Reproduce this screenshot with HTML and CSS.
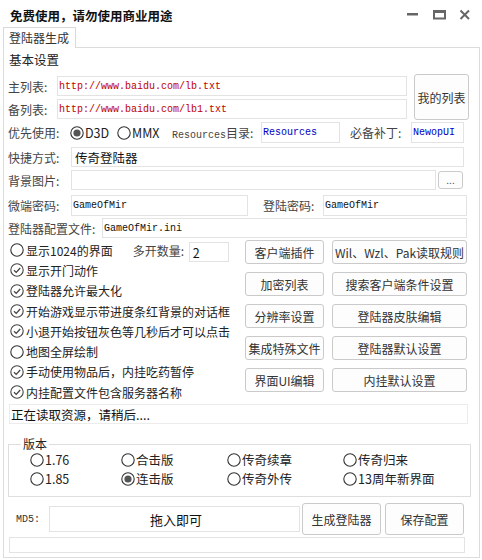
FILE: index.html
```html
<!DOCTYPE html>
<html lang="zh">
<head>
    <meta charset="UTF-8">
    <title>登陆器生成</title>
    <link rel="stylesheet" href="styles.css">
</head>
<body>
<div class="window">
    <div class="titlebar">
        <span class="title">免费使用，请勿使用商业用途</span>
        <div class="winctl">
            <svg width="14" height="14" viewBox="0 0 14 14"><rect x="1" y="6" width="11" height="2.5" fill="#666"/></svg>
            <svg width="14" height="14" viewBox="0 0 14 14"><rect x="2" y="4" width="11" height="7.5" fill="none" stroke="#666" stroke-width="2"/><rect x="1" y="3" width="13" height="3" fill="#666"/></svg>
            <svg width="14" height="14" viewBox="0 0 14 14"><path d="M2.5 3.5 L11 12 M11 3.5 L2.5 12" stroke="#666" stroke-width="2"/></svg>
        </div>
    </div>
    <div class="tabs">
        <span class="tab">登陆器生成</span>
        <span class="tab-fill"></span>
    </div>
    <div class="panel">
        <div class="section-title">基本设置</div>

        <div class="lists">
            <div class="lists-fields">
                <div class="row h20">
                    <span class="lbl" style="width:49px">主列表:</span>
                    <input class="field mono red" style="width:350px" value="http://www.baidu.com/lb.txt">
                </div>
                <div class="row h20">
                    <span class="lbl" style="width:49px">备列表:</span>
                    <input class="field mono red" style="width:350px" value="http://www.baidu.com/lb1.txt">
                </div>
            </div>
            <button class="btn btn-mylist">我的列表</button>
        </div>

        <div class="row h21 mt1">
            <span class="lbl" style="width:62px">优先使用:</span>
            <span class="opt" style="width:47px"><svg class="ico" viewBox="0 0 14 14"><circle cx="7" cy="7" r="6.2" fill="none" stroke="#333" stroke-width="1.1"/><circle cx="7" cy="7" r="3.6" fill="#555"/></svg>D3D</span>
            <span class="opt" style="width:55px"><svg class="ico" viewBox="0 0 14 14"><circle cx="7" cy="7" r="6.2" fill="none" stroke="#333" stroke-width="1.1"/></svg>MMX</span>
            <span class="lbl" style="width:89px"><span class="mono">Resources</span>目录:</span>
            <input class="field mono blue" style="width:79px" value="Resources">
            <span class="lbl" style="width:61px;margin-left:10px">必备补丁:</span>
            <input class="field mono blue" style="width:53px" value="NewopUI">
        </div>

        <div class="row h20 mt4">
            <span class="lbl" style="width:63px">快捷方式:</span>
            <input class="field" style="width:393px" value="传奇登陆器">
        </div>

        <div class="row h20 mt3">
            <span class="lbl" style="width:63px">背景图片:</span>
            <input class="field" style="width:365px" value="">
            <button class="btn btn-dots">...</button>
        </div>

        <div class="row h21 mt5">
            <span class="lbl" style="width:63px">微端密码:</span>
            <input class="field mono" style="width:177px" value="GameOfMir">
            <span class="lbl" style="width:60px;margin-left:15px">登陆密码:</span>
            <input class="field mono" style="width:144px" value="GameOfMir">
        </div>

        <div class="row h20 mt2">
            <span class="lbl" style="width:94px">登陆器配置文件:</span>
            <input class="field mono" style="width:365px" value="GameOfMir.ini">
        </div>

        <div class="options">
            <div class="checks">
                <div class="check">
                    <svg class="ico" viewBox="0 0 14 14"><circle cx="7" cy="7" r="6.2" fill="none" stroke="#333" stroke-width="1.1"/></svg>
                    <span class="check-text">显示1024的界面</span>
                    <span class="lbl" style="margin-left:20px;width:56px">多开数量:</span>
                    <input class="field num" value="2">
                </div>
                <div class="check"><svg class="ico" viewBox="0 0 14 14"><circle cx="7" cy="7" r="6.2" fill="none" stroke="#444" stroke-width="1.1"/><path d="M4 7.3 L6.2 9.4 L10.2 5" fill="none" stroke="#444" stroke-width="1.3"/></svg>显示开门动作</div>
                <div class="check"><svg class="ico" viewBox="0 0 14 14"><circle cx="7" cy="7" r="6.2" fill="none" stroke="#444" stroke-width="1.1"/><path d="M4 7.3 L6.2 9.4 L10.2 5" fill="none" stroke="#444" stroke-width="1.3"/></svg>登陆器允许最大化</div>
                <div class="check"><svg class="ico" viewBox="0 0 14 14"><circle cx="7" cy="7" r="6.2" fill="none" stroke="#444" stroke-width="1.1"/><path d="M4 7.3 L6.2 9.4 L10.2 5" fill="none" stroke="#444" stroke-width="1.3"/></svg>开始游戏显示带进度条红背景的对话框</div>
                <div class="check"><svg class="ico" viewBox="0 0 14 14"><circle cx="7" cy="7" r="6.2" fill="none" stroke="#444" stroke-width="1.1"/><path d="M4 7.3 L6.2 9.4 L10.2 5" fill="none" stroke="#444" stroke-width="1.3"/></svg>小退开始按钮灰色等几秒后才可以点击</div>
                <div class="check"><svg class="ico" viewBox="0 0 14 14"><circle cx="7" cy="7" r="6.2" fill="none" stroke="#333" stroke-width="1.1"/></svg>地图全屏绘制</div>
                <div class="check"><svg class="ico" viewBox="0 0 14 14"><circle cx="7" cy="7" r="6.2" fill="none" stroke="#444" stroke-width="1.1"/><path d="M4 7.3 L6.2 9.4 L10.2 5" fill="none" stroke="#444" stroke-width="1.3"/></svg>手动使用物品后，内挂吃药暂停</div>
                <div class="check"><svg class="ico" viewBox="0 0 14 14"><circle cx="7" cy="7" r="6.2" fill="none" stroke="#444" stroke-width="1.1"/><path d="M4 7.3 L6.2 9.4 L10.2 5" fill="none" stroke="#444" stroke-width="1.3"/></svg>内挂配置文件包含服务器名称</div>
            </div>
            <div class="actions">
                <button class="btn">客户端插件</button>
                <button class="btn">Wil、Wzl、Pak读取规则</button>
                <button class="btn">加密列表</button>
                <button class="btn">搜索客户端条件设置</button>
                <button class="btn">分辨率设置</button>
                <button class="btn">登陆器皮肤编辑</button>
                <button class="btn">集成特殊文件</button>
                <button class="btn">登陆器默认设置</button>
                <button class="btn">界面UI编辑</button>
                <button class="btn">内挂默认设置</button>
            </div>
        </div>

        <div class="status">正在读取资源，请稍后....</div>

        <fieldset class="group">
            <legend>版本</legend>
            <div class="versions">
                <span class="opt"><svg class="ico" viewBox="0 0 14 14"><circle cx="7" cy="7" r="6.2" fill="none" stroke="#333" stroke-width="1.1"/></svg>1.76</span>
                <span class="opt"><svg class="ico" viewBox="0 0 14 14"><circle cx="7" cy="7" r="6.2" fill="none" stroke="#333" stroke-width="1.1"/></svg>合击版</span>
                <span class="opt"><svg class="ico" viewBox="0 0 14 14"><circle cx="7" cy="7" r="6.2" fill="none" stroke="#333" stroke-width="1.1"/></svg>传奇续章</span>
                <span class="opt"><svg class="ico" viewBox="0 0 14 14"><circle cx="7" cy="7" r="6.2" fill="none" stroke="#333" stroke-width="1.1"/></svg>传奇归来</span>
                <span class="opt"><svg class="ico" viewBox="0 0 14 14"><circle cx="7" cy="7" r="6.2" fill="none" stroke="#333" stroke-width="1.1"/></svg>1.85</span>
                <span class="opt"><svg class="ico" viewBox="0 0 14 14"><circle cx="7" cy="7" r="6.2" fill="none" stroke="#333" stroke-width="1.1"/><circle cx="7" cy="7" r="3.6" fill="#555"/></svg>连击版</span>
                <span class="opt"><svg class="ico" viewBox="0 0 14 14"><circle cx="7" cy="7" r="6.2" fill="none" stroke="#333" stroke-width="1.1"/></svg>传奇外传</span>
                <span class="opt"><svg class="ico" viewBox="0 0 14 14"><circle cx="7" cy="7" r="6.2" fill="none" stroke="#333" stroke-width="1.1"/></svg>13周年新界面</span>
            </div>
        </fieldset>

        <div class="md5-row">
            <span class="md5-lbl mono">MD5:</span>
            <input class="field drop" value="拖入即可">
            <button class="btn btn-big">生成登陆器</button>
            <button class="btn btn-big">保存配置</button>
        </div>

        <div class="progress"></div>
    </div>
</div>
</body>
</html>
```

FILE: styles.css
```css
* {
    box-sizing: border-box;
}
body {
    margin: 0;
    background-color: #ffffff;
    font-family: "Noto Sans CJK SC", "Microsoft YaHei", sans-serif;
    font-size: 12px;
    color: #333333;
}
.window {
    width: 482px;
    height: 560px;
    overflow: hidden;
}
.titlebar {
    height: 27px;
    display: flex;
    align-items: center;
    padding: 3px 10px 0 10px;
}
.title {
    flex: 1;
    font-weight: bold;
    font-size: 12.5px;
    color: #111111;
}
.winctl {
    display: flex;
    gap: 12px;
    margin-top: -2px;
}
.tabs {
    display: flex;
    height: 21px;
    margin-left: 3px;
    width: 477px;
}
.tab {
    border: 1px solid #d9d9d9;
    border-bottom: none;
    padding: 0 6px 0 5px;
    font-size: 12px;
    line-height: 19px;
    color: #333333;
}
.tab-fill {
    flex: 1;
    border-bottom: 1px solid #dcdcdc;
}
.panel {
    margin-left: 3px;
    width: 477px;
    height: 510px;
    border: 1px solid #dcdcdc;
    border-top: none;
    padding: 0 0 0 4px;
}
.section-title {
    height: 24px;
    line-height: 24px;
    padding-left: 1px;
    font-size: 12.5px;
    color: #222222;
}
.lists {
    display: flex;
    margin-top: 2px;
    height: 47px;
}
.lists-fields {
    display: flex;
    flex-direction: column;
    gap: 3px;
    padding-top: 2px;
}
.row {
    display: flex;
    align-items: center;
}
.h20 { height: 20px; }
.h21 { height: 21px; }
.mt1 { margin-top: 1px; }
.mt2 { margin-top: 2px; }
.mt3 { margin-top: 3px; }
.mt4 { margin-top: 4px; }
.mt5 { margin-top: 5px; }
.lbl {
    flex: none;
    white-space: nowrap;
    font-size: 12px;
    color: #444444;
}
.field {
    flex: none;
    height: 100%;
    border: 1px solid #e3e3e3;
    background-color: #ffffff;
    padding: 0 0 0 3px;
    font-family: "Noto Sans CJK SC", sans-serif;
    font-size: 12.5px;
    color: #111111;
    outline: none;
}
.mono {
    font-family: "Liberation Mono", "Noto Sans CJK SC", monospace;
    font-size: 10px;
}
.field.mono {
    font-size: 10px;
    padding-left: 1px;
}
.red { color: #c00000; }
.blue { color: #0000c8; }
.btn {
    font-family: "Noto Sans CJK SC", sans-serif;
    font-size: 12px;
    color: #333333;
    background-color: #fdfdfd;
    border: 1px solid #cacaca;
    border-radius: 3px;
    padding: 0;
    white-space: nowrap;
    cursor: pointer;
}
.btn-mylist {
    width: 55px;
    height: 46px;
    margin-left: 7px;
}
.btn-dots {
    width: 25px;
    height: 18px;
    margin-left: 2px;
    font-size: 10px;
    line-height: 10px;
    color: #555555;
}
.opt {
    display: flex;
    align-items: center;
    flex: none;
    white-space: nowrap;
    font-size: 12.5px;
    color: #222222;
}
.ico {
    width: 14px;
    height: 14px;
    flex: none;
    margin-right: 1px;
}
.options {
    display: flex;
    margin-top: 2px;
    height: 155px;
}
.checks {
    width: 237px;
    padding-left: 2px;
}
.check {
    display: flex;
    align-items: center;
    height: 20.3px;
    font-size: 12px;
    white-space: nowrap;
    color: #222222;
}
.check .ico {
    margin-right: 2px;
}
.field.num {
    width: 40px;
    height: 20px;
    margin-top: 4px;
}
.actions {
    display: grid;
    grid-template-columns: 79px 135px;
    grid-auto-rows: 24px;
    column-gap: 8px;
    row-gap: 8px;
}
.status {
    margin-top: 9px;
    margin-left: 1px;
    width: 459px;
    height: 20px;
    line-height: 19px;
    border: 1px solid #ececec;
    padding-left: 1px;
    font-size: 12.5px;
    color: #111111;
}
.group {
    margin: 13px 0 0 0;
    width: 463px;
    border: 1px solid #dedede;
    padding: 0 0 8px 0;
}
.group legend {
    margin-left: 12px;
    padding: 0 2px;
    font-size: 12px;
    line-height: 14px;
    color: #222222;
}
.versions {
    display: grid;
    grid-template-columns: 91px 106px 116px 1fr;
    grid-auto-rows: 19px;
    padding-left: 21px;
    margin-top: -1px;
}
.md5-row {
    display: flex;
    align-items: center;
    height: 32px;
    margin-top: 6px;
}
.md5-lbl {
    width: 41px;
    padding-left: 8px;
    color: #333333;
}
.field.drop {
    width: 251px;
    height: 26px;
    text-align: center;
    font-size: 13px;
}
.btn-big {
    width: 79px;
    height: 32px;
    margin-left: 2px;
}
.btn-big + .btn-big {
    margin-left: 4px;
}
.progress {
    margin-top: 2px;
    margin-left: 1px;
    width: 456px;
    height: 16px;
    border: 1px solid #e3e3e3;
}
```
